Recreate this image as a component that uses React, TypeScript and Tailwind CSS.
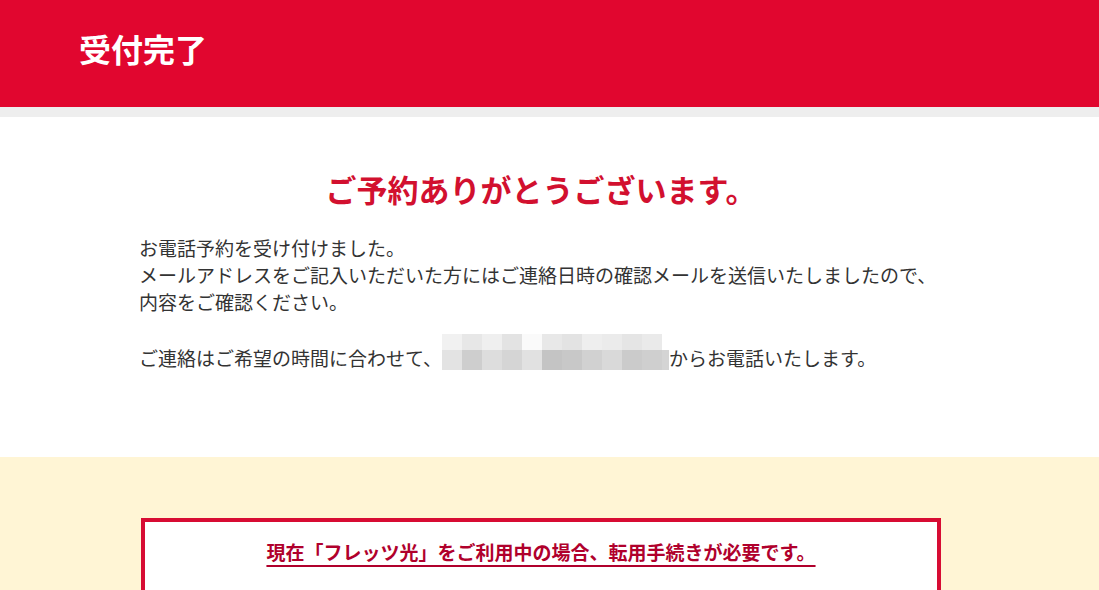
const font = 'font-["Noto_Sans_CJK_JP","Noto_Sans",sans-serif]';

const topRow = ['#f1f1f1', '#e7e7e7', '#efefef', '#e3e3e3', '#fafafa', '#e8e8e8', '#e3e3e3', '#eeeeee', '#ebebeb', '#e5e5e5', '#eaeaea'];
const bottomRow = ['#e3e3e3', '#cecece', '#dddddd', '#d5d5d5', '#e1e1e1', '#c4c4c4', '#c8c8c8', '#d1d1d1', '#d9d9d9', '#cbcbcb', '#cfcfcf'];

function Mosaic() {
  return (
    <div className="mb-[1px] flex flex-col">
      <div className="flex h-[16px]">
        {topRow.map((c, i) => (
          <div key={i} className="h-full w-[20px]" style={{ backgroundColor: c }} />
        ))}
      </div>
      <div className="flex h-[20px]">
        {bottomRow.map((c, i) => (
          <div key={i} className="h-full w-[20px]" style={{ backgroundColor: c }} />
        ))}
        <div className="h-full w-[7px] bg-[#d4d4d4]" />
      </div>
    </div>
  );
}

export default function App() {
  return (
    <div className={`min-h-screen bg-white ${font}`}>
      <header className="h-[107px] bg-[#e1062f] pr-[17px]">
        <div className="mx-auto flex h-full w-[920px] items-center">
          <h1 className="-ml-[2px] -mt-[12px] text-[32px] font-bold text-white">受付完了</h1>
        </div>
      </header>
      <div className="h-[10px] bg-[#eeeeee]" />

      <section className="h-[340px] pr-[17px]">
        <div className="mx-auto w-[800px] pt-[49px]">
          <h2 className="text-center text-[31px] font-bold leading-[46px] text-[#d2102f]">
            ご予約ありがとうございます。
          </h2>
          <div className="-ml-[2px] mt-[22px] text-[19px] leading-[27px] text-[#333333]">
            <p>
              お電話予約を受け付けました。
              <br />
              メールアドレスをご記入いただいた方にはご連絡日時の確認メールを送信いたしましたので、
              <br />
              内容をご確認ください。
            </p>
            <p className="mt-[19px] flex items-end">
              <span>ご連絡はご希望の時間に合わせて、</span>
              <Mosaic />
              <span>からお電話いたします。</span>
            </p>
          </div>
        </div>
      </section>

      <section className="bg-[#fff5d5] pr-[17px] pt-[61px] pb-[40px]">
        <div className="mx-auto h-[120px] w-[800px] border-4 border-[#d70c33] bg-white px-[30px] pt-[16px]">
          <p className="text-center text-[19px] font-bold leading-[28px]">
            <a href="#" className="text-[#b0002c] underline decoration-[1.5px] underline-offset-[5px]">
              現在「フレッツ光」をご利用中の場合、転用手続きが必要です。
            </a>
          </p>
        </div>
      </section>
    </div>
  );
}
